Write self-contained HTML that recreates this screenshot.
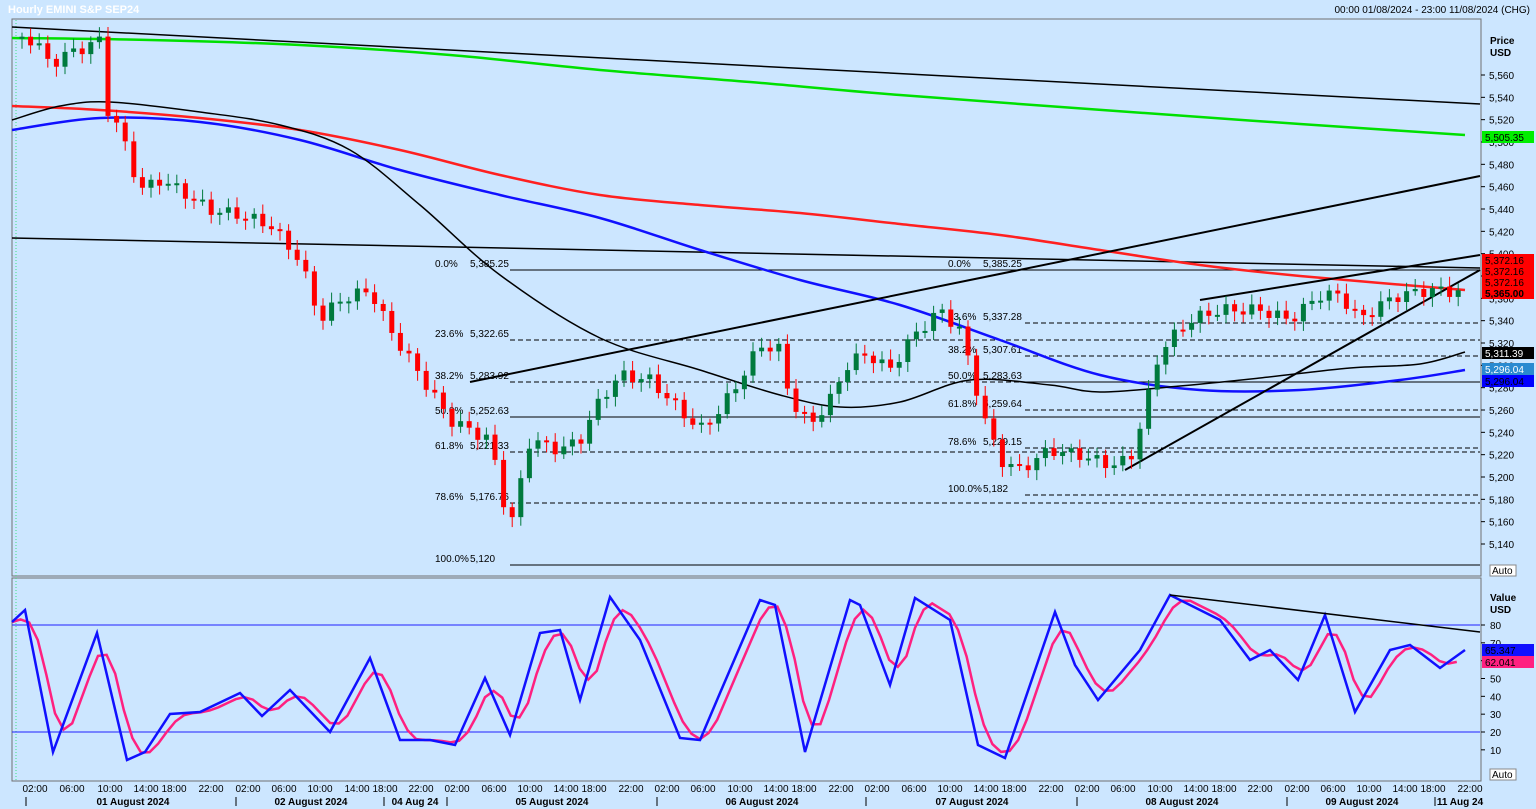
<!DOCTYPE html>
<html><head><meta charset="utf-8"><style>
html,body{margin:0;padding:0;background:#cce6ff;width:1536px;height:809px;overflow:hidden}
svg{display:block;font-family:"Liberation Sans",sans-serif}
</style></head><body>
<svg id="s" width="1536" height="809" xmlns="http://www.w3.org/2000/svg">
<rect width="1536" height="809" fill="#cce6ff"/>
<text x="8" y="13" font-size="11" font-weight="bold" fill="#fff">Hourly EMINI S&amp;P SEP24</text>
<text x="1530" y="13" font-size="10" fill="#000" text-anchor="end">00:00 01/08/2024 - 23:00 11/08/2024 (CHG)</text>
<rect x="12" y="19" width="1469" height="557" fill="none" stroke="#707070"/>
<rect x="12" y="578" width="1469" height="203" fill="none" stroke="#707070"/>
<line x1="16" y1="20" x2="16" y2="780" stroke="#40e080" stroke-dasharray="1,2"/>
<g id="g"></g>
</svg>
<script>
const g=document.getElementById('g');let h='';
function pl(pts,c,w,d){h+=`<polyline points="${pts.map(p=>p.join(',')).join(' ')}" fill="none" stroke="${c}" stroke-width="${w}" ${d?'stroke-dasharray="'+d+'"':''}/>`;}
function sm(p,c,w){let d=`M${p[0][0]},${p[0][1]}`;for(let i=0;i<p.length-1;i++){const p0=p[Math.max(0,i-1)],p1=p[i],p2=p[i+1],p3=p[Math.min(p.length-1,i+2)];
d+=` C${p1[0]+(p2[0]-p0[0])/6},${p1[1]+(p2[1]-p0[1])/6} ${p2[0]-(p3[0]-p1[0])/6},${p2[1]-(p3[1]-p1[1])/6} ${p2[0]},${p2[1]}`;}
h+=`<path d="${d}" fill="none" stroke="${c}" stroke-width="${w}"/>`;}
function ln(x1,y1,x2,y2,c,w,d){h+=`<line x1="${x1}" y1="${y1}" x2="${x2}" y2="${y2}" stroke="${c}" stroke-width="${w}" ${d?'stroke-dasharray="'+d+'"':''}/>`;}
function tx(x,y,t,o){o=o||{};h+=`<text x="${x}" y="${y}" font-size="${o.s||10}" fill="${o.c||'#000'}" ${o.b?'font-weight="bold"':''} ${o.a?'text-anchor="'+o.a+'"':''}>${t}</text>`;}
const f1=[[270,'0.0%','5,385.25',0],[340,'23.6%','5,322.65',1],[382,'38.2%','5,283.92',1],[417,'50.0%','5,252.63',0],[452,'61.8%','5,221.33',1],[503,'78.6%','5,176.76',1],[565,'100.0%','5,120',0]];
f1.forEach(f=>{ln(510,f[0],1480,f[0],'#000',1,f[3]?'5,3':'');tx(435,f[0]-3,f[1]);tx(470,f[0]-3,f[2]);});
const f2=[[270,'0.0%','5,385.25'],[323,'23.6%','5,337.28'],[356,'38.2%','5,307.61'],[382,'50.0%','5,283.63'],[410,'61.8%','5,259.64'],[448,'78.6%','5,229.15'],[495,'100.0%','5,182']];
f2.forEach(f=>{ln(1025,f[0],1480,f[0],'#000',1,'5,3');tx(948,f[0]-3,f[1]);tx(983,f[0]-3,f[2]);});
ln(12,27,1480,104,'#000',1.5);
sm([[12,38],[150,40],[300,45],[450,55],[600,70],[750,82],[900,95],[1130,112],[1300,124],[1465,135]],'#00e000',2.5);
ln(12,238,1480,268,'#000',1.5);
sm([[12,106],[100,110],[200,118],[300,130],[400,150],[500,175],[600,195],[700,205],[800,213],[900,224],[1000,235],[1100,250],[1200,265],[1300,276],[1465,290]],'#ff2020',2.5);
sm([[12,130],[100,118],[200,122],[300,140],[400,170],[500,195],[600,218],[700,250],[800,280],[900,305],[1000,340],[1100,375],[1200,390],[1300,390],[1400,380],[1465,370]],'#1010ff',2.5);
sm([[12,120],[60,106],[110,102],[200,112],[280,125],[350,150],[420,205],[500,275],[600,338],[700,370],[780,395],[840,407],[900,402],[970,380],[1050,385],[1100,392],[1180,386],[1260,378],[1350,368],[1420,364],[1465,352]],'#000',1.5);
ln(470,382,1480,176,'#000',2);
ln(1125,470,1480,270,'#000',2);
ln(1200,300,1480,255,'#000',2);
const P=[[18,38],[35,40],[50,65],[65,55],[90,45],[100,40],[108,110],[120,130],[140,190],[160,180],[180,190],[210,210],[240,215],[270,225],[300,260],[320,320],[340,300],[370,290],[390,330],[420,375],[450,420],[470,430],[490,440],[510,530],[530,440],[560,450],[580,440],[600,400],[620,375],[650,380],[680,410],[700,430],[720,410],[740,380],[760,345],[780,350],[790,400],[810,425],[830,400],[850,360],[870,355],[890,370],[910,340],[940,310],[960,330],[985,420],[1000,460],[1020,470],[1050,450],[1080,455],[1110,465],[1130,460],[1145,410],[1160,350],[1190,320],[1220,310],[1260,310],[1290,320],[1320,295],[1340,295],[1360,320],[1380,305],[1400,295],[1430,290],[1465,292]];
function ip(x){for(let i=1;i<P.length;i++){if(x<=P[i][0]){const a=P[i-1],b=P[i];return a[1]+(b[1]-a[1])*(x-a[0])/(b[0]-a[0]);}}return P[P.length-1][1];}
let prev=ip(18);
for(let x=22;x<=1466;x+=8.6){let c=ip(x)+Math.sin(x*1.7)*6;let o=prev;let up=c<o;let top=Math.min(o,c),bot=Math.max(o,c);if(bot-top<2){bot=top+2;}
const col=up?'#007a3d':'#ff0000';ln(x,top-4-Math.abs(Math.sin(x))*6,x,bot+4+Math.abs(Math.cos(x))*6,col,1);
h+=`<rect x="${x-2.5}" y="${top}" width="5" height="${bot-top}" fill="${col}"/>`;prev=c;}
ln(12,625,1480,625,'#2020ff',1);ln(12,732,1480,732,'#2020ff',1);
const B=[[12,622],[25,610],[53,752],[97,633],[127,760],[145,752],[170,714],[200,712],[240,693],[262,716],[290,690],[330,732],[370,658],[400,740],[430,740],[455,745],[485,678],[510,735],[540,633],[560,630],[580,700],[610,597],[640,640],[680,738],[700,740],[720,693],[760,600],[775,605],[805,752],[850,600],[860,605],[890,685],[915,598],[950,620],[978,745],[1005,758],[1055,612],[1075,665],[1098,700],[1140,650],[1170,595],[1220,620],[1250,660],[1270,650],[1298,680],[1325,615],[1355,712],[1390,650],[1410,645],[1440,668],[1465,650]];
function ib(x){for(let i=1;i<B.length;i++){if(x<=B[i][0]){const a=B[i-1],b=B[i];return a[1]+(b[1]-a[1])*(x-a[0])/(b[0]-a[0]);}}return B[B.length-1][1];}
const pk=[];for(let x=12;x<=1465;x+=8.6){let s=0;for(let k=0;k<3;k++)s+=ib(Math.max(12,x-k*8.6));pk.push([x.toFixed(1),(s/3).toFixed(1)]);}
pl(pk,'#ff2080',2.5);pl(B,'#1010ff',2.5);
ln(1170,595,1480,632,'#000',1.5);
for(let v=5560;v>=5140;v-=20){const y=75+(5560-v)*469/420;ln(1481,y,1485,y,'#000',1);tx(1489,y+4,'5,'+String(v).slice(1));}
tx(1490,44,'Price',{b:1});tx(1490,56,'USD',{b:1});
function box(y,t,bg,c,b){h+=`<rect x="1482" y="${y-6}" width="52" height="12" fill="${bg}"/>`;tx(1485,y+4,t,{c:c,b:b});}
box(137,'5,505.35','#00ee00','#000');
box(260,'5,372.16','#ff0000','#000');box(271,'5,372.16','#ff0000','#000');box(282,'5,372.16','#ff0000','#000');box(293,'5,365.00','#ff0000','#000',1);
box(353,'5,311.39','#000','#fff');box(369,'5,296.04','#2a8ad0','#fff');box(381,'5,296.04','#0000ff','#000');
h+=`<rect x="1490" y="565" width="26" height="11" fill="#fff" stroke="#888"/>`;tx(1492,574,'Auto');
h+=`<rect x="1490" y="769" width="26" height="11" fill="#fff" stroke="#888"/>`;tx(1492,778,'Auto');
tx(1490,601,'Value',{b:1});tx(1490,613,'USD',{b:1});
for(let v=80;v>=10;v-=10){const y=625+(80-v)*107/60;ln(1481,y,1485,y,'#000',1);tx(1490,y+4,v);}
box(650,'65.347','#1010ff','#000');box(662,'62.041','#ff2080','#000');
const T=['02:00','06:00','10:00','14:00','18:00','22:00'];
const TX=[35,72,110,146,174,211,248,284,320,357,385,421,457,494,530,566,594,631,667,703,740,776,804,841,877,914,950,986,1014,1051,1087,1123,1160,1196,1224,1260,1297,1333,1369,1405,1433,1470];
TX.forEach((x,i)=>tx(x,792,T[i%6],{a:'middle'}));
[26,236,384,447,657,866,1077,1287,1435].forEach(x=>ln(x,797,x,806,'#000',1));
[[133,'01 August 2024'],[311,'02 August 2024'],[415,'04 Aug 24'],[552,'05 August 2024'],[762,'06 August 2024'],[972,'07 August 2024'],[1182,'08 August 2024'],[1362,'09 August 2024'],[1460,'11 Aug 24']].forEach(d=>tx(d[0],805,d[1],{b:1,a:'middle'}));
g.innerHTML=h;
</script>
</body></html>
